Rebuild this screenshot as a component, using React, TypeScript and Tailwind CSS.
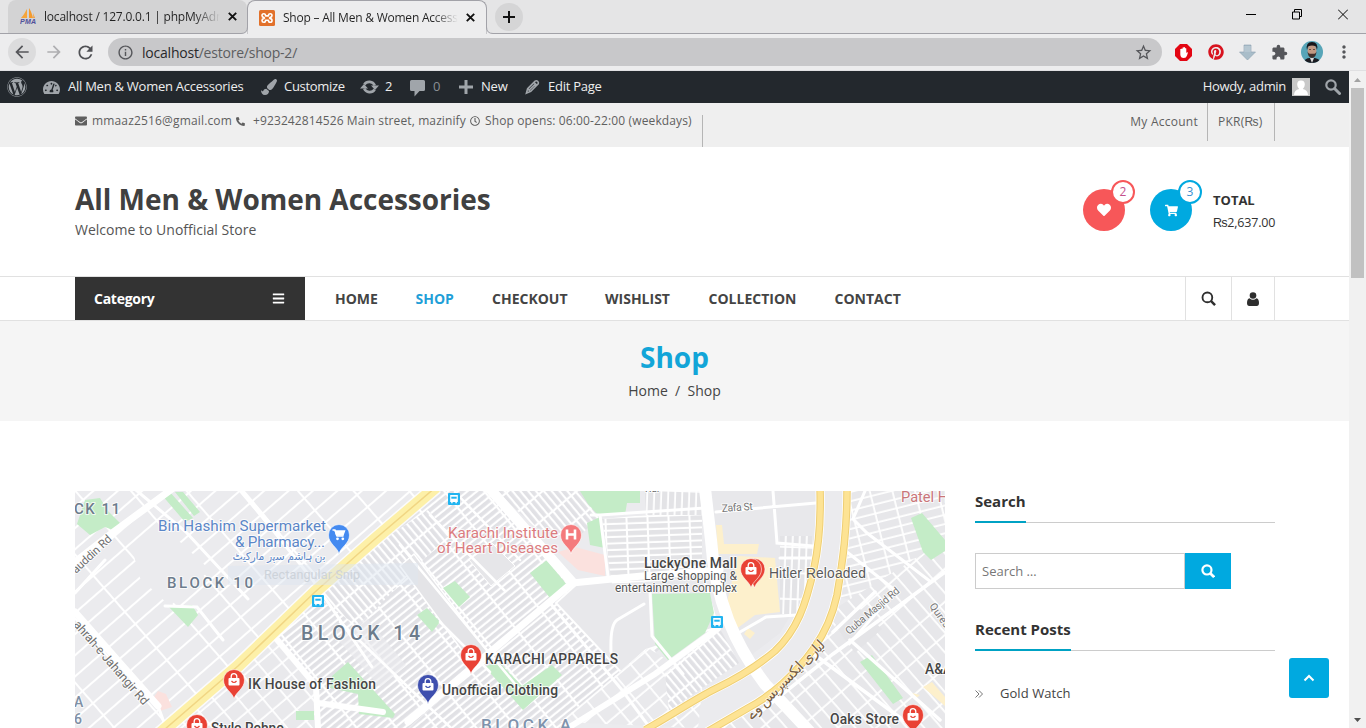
import React from "react";
import { FaWordpress, FaEnvelope, FaRegClock, FaHeart, FaShoppingCart, FaBars, FaPinterest, FaPaintBrush, FaTachometerAlt, FaPhoneAlt } from "react-icons/fa";
import { MdArrowBack, MdArrowForward, MdRefresh, MdInfoOutline, MdStarBorder, MdExtension, MdMoreVert } from "react-icons/md";

/* ---------- small icons ---------- */

function SearchIcon({ size, w = 2 }: { size: number; w?: number }) {
  return (
    <svg width={size} height={size} viewBox="0 0 16 16" fill="none" stroke="currentColor" strokeWidth={w}>
      <circle cx="6.8" cy="6.8" r="5.2" />
      <path d="M10.5 10.5L15 15" strokeWidth={w + 0.6} />
    </svg>
  );
}

function PmaIcon() {
  return (
    <svg width="17" height="17" viewBox="0 0 17 17">
      <path d="M7 1C5 4 4 7 1 10h6z" fill="#f6a53b" />
      <path d="M9 0v10h4C12 6 11 3 9 0zM13 5c0 2 1 4 0 5h2z" fill="#f59a2c" />
      <text x="0" y="16.2" fontSize="7" fontWeight="700" fontStyle="italic" fontFamily="Liberation Sans, sans-serif" fill="#50509a" textLength="16">PMA</text>
    </svg>
  );
}

function XamppIcon() {
  return (
    <svg width="16" height="16" viewBox="0 0 16 16">
      <rect width="16" height="16" rx="1.5" fill="#e2712b" />
      <path d="M4.800 3.800Q3 3.800 3 5.500T4.800 7.400L5.500 8l-.7.600Q3 8.800 3 10.500t1.800 1.800Q6.600 12.300 6.600 10.200h2.800q0 2.100 1.800 2.100T13 10.500 11.200 8.600L10.500 8l.7-.6Q13 7.200 13 5.500T11.200 3.800 9.400 5.900H6.600Q6.600 3.800 4.800 3.800z" fill="none" stroke="#fff" strokeWidth="1.600" strokeLinejoin="round" />
    </svg>
  );
}

function CloseX() {
  return (
    <svg width="9" height="9" viewBox="0 0 9 9" stroke="#111" strokeWidth="1.9">
      <path d="M.8.8l7.4 7.4M8.2.8L.8 8.2" />
    </svg>
  );
}

/* ---------- browser chrome ---------- */

function TabStrip() {
  return (
    <div className="flex h-[34px] border-b border-[#a2a2a8] bg-[#e5e5e6]">
      <div className="ml-2 flex w-[239px] items-center rounded-t-lg bg-[#d3d3d4] pl-3">
        <PmaIcon />
        <span className="ml-[7px] w-[176px] overflow-hidden whitespace-nowrap bg-gradient-to-r from-[#222] from-85% to-[#d3d3d4] bg-clip-text text-[12px] tracking-[-0.2px] text-transparent">
          localhost / 127.0.0.1 | phpMyAdmin
        </span>
        <span className="ml-[8px]"><CloseX /></span>
      </div>
      <div className="relative -mb-px flex w-[240px] items-center rounded-t-lg border border-b-0 border-[#a2a2a8] bg-[#ededee] pl-[11px]">
        <svg width="7" height="7" viewBox="0 0 7 7" className="absolute -left-[7px] bottom-0 fill-[#ededee] stroke-[#a2a2a8]"><path d="M0 6.500Q6.500 6.500 6.500 0V8H0z" stroke="none" /><path d="M0 6.500Q6.500 6.500 6.500 0" fill="none" /></svg>
        <svg width="7" height="7" viewBox="0 0 7 7" className="absolute -right-[7px] bottom-0 fill-[#ededee] stroke-[#a2a2a8]"><path d="M7 6.500Q.5 6.500.5 0V8H7z" stroke="none" /><path d="M7 6.500Q.5 6.500.5 0" fill="none" /></svg>
        <XamppIcon />
        <span className="ml-[8px] w-[175px] overflow-hidden whitespace-nowrap bg-gradient-to-r from-[#222] from-85% to-[#ededee] bg-clip-text text-[12px] tracking-[-0.22px] text-transparent">
          Shop – All Men &amp; Women Accessories
        </span>
        <span className="ml-[8px]"><CloseX /></span>
      </div>
      <div className="ml-[8px] mt-[3px] flex size-[28px] items-center justify-center rounded-full bg-[#d5d5d6]">
        <svg width="12" height="12" viewBox="0 0 12 12" stroke="#111" strokeWidth="2"><path d="M6 0v12M0 6h12" /></svg>
      </div>
      <div className="ml-auto flex items-start gap-[36px] pr-[18px] pt-[9px] text-black">
        <svg width="10" height="11" viewBox="0 0 10 11" stroke="currentColor"><path d="M0 5.5h10" /></svg>
        <svg width="10" height="11" viewBox="0 0 10 11" fill="none" stroke="currentColor"><path d="M.5 3h7v7h-7zM2.5 3V.5h7v7H7.5" /></svg>
        <svg width="10" height="11" viewBox="0 0 10 11" stroke="currentColor"><path d="M0 .5l10 10M10 .5L0 10.5" /></svg>
      </div>
    </div>
  );
}

function Toolbar() {
  return (
    <div className="flex h-[37px] items-center border-b border-[#e0e0e2] bg-[#ededee] text-[#55565a]">
      <div className="ml-2 flex size-[28px] items-center justify-center rounded-full bg-[#dcdcdd]"><MdArrowBack size={20} /></div>
      <MdArrowForward size={20} className="ml-2 text-[#aeaeb1]" />
      <MdRefresh size={21} className="ml-[11px] text-[#505155]" />
      <div className="ml-[12px] flex h-[28px] w-[1054px] items-center rounded-full bg-[#c8c8ca] pl-[9px] pr-[9px]">
        <MdInfoOutline size={17} />
        <span className="ml-[8px] text-[14px] tracking-[-0.22px] text-[#5c5d60]"><span className="text-[#28292b]">localhost</span>/estore/shop-2/</span>
        <MdStarBorder size={19} className="ml-auto" />
      </div>
      <svg width="17" height="17" viewBox="0 0 17 17" className="ml-[13px]">
        <path d="M5 0h7l5 5v7l-5 5H5l-5-5V5z" fill="#e30613" />
        <path d="M5.300 5v5.500q.2 3.500 3.500 3.500 2.500 0 3.200-2.500L13 8.500q-.8-.8-1.700.5V4.500q-.7-.8-1.200 0V3.500q-.7-.8-1.300 0-.7-.6-1.300.3V5q-1-1-1.200 0z" fill="#fff" />
      </svg>
      <FaPinterest size={16} className="ml-4 text-[#d8131f]" />
      <svg width="17" height="17" viewBox="0 0 17 17" className="ml-[15px]">
        <path d="M5 1h7v7h4.500l-8 8-8-8H5z" fill="#a9bdc9" stroke="#8ba0ae" strokeWidth=".6" />
        <path d="M5 3h7M5 5h7M5 7h7" stroke="#c9d6de" strokeWidth=".8" />
      </svg>
      <MdExtension size={17} className="ml-[15px]" />
      <svg width="22" height="22" viewBox="0 0 22 22" className="ml-[13px]">
        <clipPath id="face"><circle cx="11" cy="11" r="11" /></clipPath>
        <g clipPath="url(#face)">
          <rect width="22" height="22" fill="#57a5b8" />
          <path d="M2 22q2-5 7-5h5q5 1 6 5z" fill="#1b1c22" />
          <path d="M9 17l2 5 2-5z" fill="#dcdcdc" />
          <ellipse cx="11" cy="9.500" rx="4.400" ry="6" fill="#c29a84" />
          <path d="M6 9Q4.500 1 11 1 17.500 1 16 9L15 5.500Q11 3.500 7 5.500z" fill="#18161a" />
          <path d="M6.500 10.500q.5 6.500 4.500 6.500t4.500-6.500q-1 2.500-2.300 2.300H8.800q-1.300 0-2.300-2.300z" fill="#3d2f2b" />
          <path d="M8 8.500h2M12 8.500h2" stroke="#4a372f" strokeWidth=".8" />
        </g>
      </svg>
      <MdMoreVert size={20} className="ml-[11px]" />
    </div>
  );
}

/* ---------- site ---------- */

function AdminBar() {
  return (
    <div className="flex h-[32px] items-center bg-[#23282d] text-[13px] text-[#eee]">
      <FaWordpress size={20} className="ml-[7px] text-[#a0a5aa]" />
      <FaTachometerAlt size={17} className="ml-[16px] text-[#a0a5aa]" />
      <span className="ml-[8px] w-[176px] whitespace-nowrap tracking-[-0.25px]">All Men &amp; Women Accessories</span>
      <FaPaintBrush size={16} className="ml-[17px] text-[#a0a5aa]" />
      <span className="ml-[7px] w-[61px] whitespace-nowrap tracking-[-0.3px]">Customize</span>
      <svg width="19" height="16" viewBox="0 0 19 16" className="ml-[15px]">
        <path d="M4.300 5.500A6 6 0 0 1 14.800 6.500M14.700 10.500A6 6 0 0 1 4.200 9.500" fill="none" stroke="#a0a5aa" strokeWidth="2.600" />
        <path d="M11 6.500h8L15 11zM0 9.500h8L4 5z" fill="#a0a5aa" />
      </svg>
      <span className="ml-[6px] w-[8px]">2</span>
      <svg width="15" height="17" viewBox="0 0 15 17" className="ml-[17px] mt-[2px] fill-[#a0a5aa]"><path d="M1.500 0h12q1.500 0 1.500 1.500v8q0 1.500-1.500 1.500H9.500l-5 5.500V11h-3Q0 11 0 9.500v-8Q0 0 1.500 0z" /></svg>
      <span className="ml-[8px] w-[8px] text-[#8a8f94]">0</span>
      <svg width="14" height="14" viewBox="0 0 14 14" className="ml-[18px] fill-[#a0a5aa]"><path d="M5.500 0h3v5.500H14v3H8.500V14h-3V8.500H0v-3h5.500z" /></svg>
      <span className="ml-[8px] w-[27px] whitespace-nowrap tracking-[-0.2px]">New</span>
      <svg width="15" height="16" viewBox="0 0 16 16" className="ml-[17px]" fill="none" stroke="#a0a5aa" strokeWidth="1.700"><path d="M1.500 14.500l1.300-4.800 8-8q1.500-.8 2.700.3 1.300 1.200.6 2.700l-8 8zM2.800 9.700l3.300 3.200M9.500 3l3.500 3.500M4.500 11.200l6.800-6.600" /></svg>
      <span className="ml-[8px] whitespace-nowrap tracking-[-0.25px]">Edit Page</span>
      <span className="ml-auto whitespace-nowrap tracking-[-0.32px]">Howdy, admin</span>
      <svg width="18" height="18" viewBox="0 0 18 18" className="ml-[6px]">
        <rect width="18" height="18" fill="#c8c8c8" />
        <path d="M9 2.500q4 0 3.800 4.300-.2 3-2 4.200 5 1 5.200 6H2q.2-5 5.200-6-1.800-1.200-2-4.200Q5 2.500 9 2.500z" fill="#fff" />
      </svg>
      <svg width="16" height="16" viewBox="0 0 16 16" className="ml-[15px] mr-[8px]" fill="none" stroke="#a0a5aa"><circle cx="6" cy="6" r="4.700" strokeWidth="2.200" /><path d="M9.500 9.500l5 5" strokeWidth="3" strokeLinecap="round" /></svg>
    </div>
  );
}

function TopBar() {
  return (
    <div className="flex h-[44px] bg-[#efefef] pl-[75px] pr-[74px] text-[12px] font-medium text-[#5f5f5f]">
      <div className="mt-[12px] flex h-[32px] w-[628px] items-start whitespace-nowrap border-r border-[#b5b5b5] leading-[12px]">
        <FaEnvelope size={12} className="shrink-0" />
        <span className="ml-[5px] w-[140px] tracking-[0.16px]">mmaaz2516@gmail.com</span>
        <FaPhoneAlt size={9} className="ml-[4px] mt-[2px] shrink-0" />
        <span className="ml-[8px] w-[214px] tracking-[0.11px]">+923242814526 Main street, mazinify</span>
        <FaRegClock size={10} className="ml-[3px] mt-px shrink-0" />
        <span className="ml-[5px] tracking-[0.13px]">Shop opens: 06:00-22:00 (weekdays)</span>
      </div>
      <div className="ml-auto flex h-[38px]">
        <span className="border-r border-[#b5b5b5] pr-[9px] leading-[37px] tracking-[0.25px]">My Account</span>
        <span className="w-[67px] whitespace-nowrap border-r border-[#b5b5b5] pl-[10px] leading-[37px] tracking-[0.25px]">PKR(₨)</span>
      </div>
    </div>
  );
}

function Header() {
  return (
    <div className="flex h-[129px] justify-between pl-[75px] pr-[74px]">
      <div className="pt-[33px]">
        <h1 className="whitespace-nowrap text-[28px] font-bold leading-[38px] tracking-[-0.02px] text-[#404040]">All Men &amp; Women Accessories</h1>
        <p className="mt-px text-[14px] leading-[22px] tracking-[0.01px] text-[#555]">Welcome to Unofficial Store</p>
      </div>
      <div className="flex pt-[42px]">
        <div className="relative flex size-[42px] items-center justify-center rounded-full bg-[#f75759] text-white">
          <FaHeart size={14} />
          <span className="absolute -right-[10px] -top-[9px] flex size-[24px] items-center justify-center rounded-full border-2 border-[#f75759] bg-white text-[12px] text-[#c4508c]">2</span>
        </div>
        <div className="relative ml-[25px] flex size-[42px] items-center justify-center rounded-full bg-[#00a9e0] text-white">
          <FaShoppingCart size={13} />
          <span className="absolute -right-[10px] -top-[9px] flex size-[24px] items-center justify-center rounded-full border-2 border-[#00a9e0] bg-white text-[12px] text-[#3a8fd0]">3</span>
        </div>
        <div className="ml-[21px] w-[62px] whitespace-nowrap text-[#333]">
          <div className="text-[13px] font-bold leading-[23px]">TOTAL</div>
          <div className="text-[12.500px] leading-[22px] tracking-[-0.2px]">₨2,637.00</div>
        </div>
      </div>
    </div>
  );
}

function Nav() {
  return (
    <div className="flex h-[45px] border-y border-[#e1e1e1] pl-[75px] pr-[74px] text-[14px] font-bold text-[#444]">
      <div className="flex w-[230px] items-center justify-between bg-[#333] pl-[19px] pr-[20px] text-white">
        <span className="tracking-[-0.26px]">Category</span>
        <FaBars size={13} />
      </div>
      <div className="flex items-center whitespace-nowrap pl-[30px]">
        <span className="w-[80.500px]">HOME</span>
        <span className="w-[76.500px] text-[#1f9fd8]">SHOP</span>
        <span className="w-[113px]">CHECKOUT</span>
        <span className="w-[103.500px]">WISHLIST</span>
        <span className="w-[126px]">COLLECTION</span>
        <span>CONTACT</span>
      </div>
      <div className="ml-auto flex text-[#2e2e2e]">
        <div className="flex w-[46px] items-center justify-center border-l border-[#e1e1e1]"><SearchIcon size={15} w={2} /></div>
        <div className="flex w-[44px] items-center justify-center border-x border-[#e1e1e1]">
          <svg width="12" height="14" viewBox="0 0 12 14" fill="currentColor"><circle cx="6" cy="3.500" r="3.300" /><path d="M2.500 6.200Q6 9.300 9.500 6.200 12 7 12 11q0 3-2.300 3H2.300Q0 14 0 11q0-4 2.500-4.800z" /></svg>
        </div>
      </div>
    </div>
  );
}

/* ---------- map ---------- */

const C = {
  road: "#ffffff",
  land: "#ebebee",
  park: "#c4ecc7",
  hwy: "#fdf0a8",
};

function Grid({ id, w, h, a, gap = 1.8, fill = "#e7e7ea", x = 0, y = 0 }: { id: string; w: number; h: number; a: number; gap?: number; fill?: string; x?: number; y?: number }) {
  return (
    <pattern id={id} width={w} height={h} patternUnits="userSpaceOnUse" patternTransform={`translate(${x} ${y}) rotate(${a})`}>
      <rect width={w} height={h} fill="#fff" />
      <rect width={w - gap} height={h - gap} fill={fill} />
    </pattern>
  );
}

function Pin({ x, y, color, kind }: { x: number; y: number; color: string; kind: "bag" | "cart" | "h" }) {
  return (
    <g transform={`translate(${x} ${y})`}>
      <path d="M0 19C-1.500 12-10.500 9-10.500 0a10.500 10.500 0 0 1 21 0C10.500 9 1.500 12 0 19z" fill={color} stroke="#fff" strokeWidth=".6" />
      {kind === "bag" && (
        <g>
          <rect x="-5.500" y="-2" width="11" height="7.500" rx="1" fill="#fff" />
          <path d="M-2.800-2v-1.500a2.800 2.800 0 0 1 5.600 0V-2" fill="none" stroke="#fff" strokeWidth="1.300" />
          <path d="M-2.500 1q2.500 3 5 0" fill="none" stroke={color} strokeWidth="1.200" />
        </g>
      )}
      {kind === "cart" && (
        <g fill="none" stroke="#fff" strokeWidth="1.400">
          <path d="M-6.500-5h2.500l2 6h6.500" />
          <path d="M-3.800-4H5.500L4 0h-6.500z" fill="#fff" />
          <circle cx="-1.500" cy="3.800" r=".7" /><circle cx="3.800" cy="3.800" r=".7" />
        </g>
      )}
      {kind === "h" && <path d="M-4-5.500v10M4-5.500v10M-4-.5h8" stroke="#fff" strokeWidth="2.600" />}
    </g>
  );
}

function Bus({ x, y }: { x: number; y: number }) {
  return (
    <g transform={`translate(${x} ${y})`}>
      <rect x="-6" y="-6" width="12" height="12" rx="1" fill="#21b4f0" />
      <path d="M-3.800-4h7.600v7h-1v1.200h-1.400V3h-2.800v1.200h-1.400V3h-1z" fill="#fff" />
      <path d="M-2.700-2.300h5.400v2h-5.400z" fill="#21b4f0" />
    </g>
  );
}

type LabelProps = { x: number; y: number; len?: number; size: number; color?: string; anchor?: "start" | "end" | "middle"; weight?: number; rotate?: number; font?: string; children: string };

function Label({ x, y, len, size, color = "#454545", anchor = "start", weight = 400, rotate = 0, font = "Roboto, sans-serif", children }: LabelProps) {
  return (
    <text
      transform={`translate(${x} ${y}) rotate(${rotate})`}
      textAnchor={anchor}
      fontSize={size}
      fontWeight={weight}
      fontFamily={font}
      fill={color}
      stroke="#fff"
      strokeWidth="2"
      strokeOpacity=".75"
      strokeLinejoin="round"
      paintOrder="stroke"
      textLength={len}
    >
      {children}
    </text>
  );
}

function StoreMap() {
  const left = "M820 488C821 520 819 545 814 568C806 605 797 630 775 651C755 668 738 678 715 689C695 699 675 713 645 730";
  const right = "M847 488C847 530 843 560 837 595C832 618 824 634 814 648C796 674 771 696 748 708L705 733";
  return (
    <svg width="870" height="237" viewBox="75 491 870 237" className="block shrink-0">
      <defs>
        <Grid id="nw" w={42} h={16} a={-41} gap={2} fill="#ebebee" x={95} y={512} />
        <Grid id="sw" w={19} h={15} a={-40} fill="#e9e9ec" />
        <Grid id="strip" w={31} h={6} a={-39} gap={2.2} fill="#e1e1e5" x={8} y={0} />
        <Grid id="dense" w={6} h={22} a={-40} gap={2.2} fill="#e1e1e5" />
        <Grid id="rows" w={21} h={6.5} a={-2} gap={2} fill="#e3e3e6" />
        <Grid id="cols" w={7} h={26} a={2} gap={1.8} fill="#e3e3e6" />
        <Grid id="east" w={13} h={25} a={-41} fill="#e7e7ea" />
        <Grid id="east2" w={22} h={9} a={-14} fill="#e7e7ea" />
      </defs>
      <rect x="75" y="491" width="870" height="237" fill={C.land} />

      {/* street blocks */}
      <path d="M75 491H435L165 728H75z" fill="url(#nw)" />
      <path d="M133 552l32-24 45 42-40 36-30-28z" fill={C.land} />
      <path d="M435 491H492L572 582 408 728H165z" fill="url(#strip)" />
      <path d="M165 728L275 636 318 688 316 728z" fill="url(#sw)" />
      <path d="M318 598l65-58 45-30 22 24-32 31-59 62z" fill="url(#dense)" />
      <path d="M400 566l14-12L545 728h-26z" fill="#e4e4e7" stroke="#fff" strokeWidth="1.500" />
      <path d="M469 560l23-17 23 23-24 20z" fill="#e6e6e9" stroke="#fff" />
      <path d="M338 640l28-23 40 48-26 22z" fill={C.land} opacity=".6" />
      <path d="M496 491H585L602 515 575 540 535 527z" fill="url(#dense)" />
      <path d="M572 584L495 650 410 728H560L665 645z" fill="url(#strip)" />
      <path d="M556 603l22-20 125-8 15 52-72 23-25 22z" fill="#e8e8eb" stroke="#fff" strokeWidth="2" />
      <path d="M560 722l88-74 55 35-5 45z" fill="url(#sw)" />
      <path d="M602 519l100-9v68l-90 6z" fill="url(#rows)" />
      <path d="M645 491h58v24h-58z" fill="url(#cols)" />
      <path d="M712 491H815V575L780 633 745 660 728 620 715 570z" fill="#e8e8eb" />
      <path d="M780 536h33v40l-12 38h-21z" fill="url(#cols)" />
      <path d="M850 491h95v50l-60 66-46-10z" fill="url(#east2)" />
      <path d="M945 540v188H712l94-60 30-60z" fill="url(#east)" />
      <path d="M835 626l25-17 22 20-27 24z" fill="#e4e4e7" />
      <path d="M665 674l54-47 20 36-70 48z" fill="url(#dense)" />

      {/* points of interest */}
      <g fill={C.park}>
        <path d="M85 500l15-2 8 13 12 12-2 9-13-5-15 8-13-11z" />
        <path d="M161 494l8-3 24 27-8 4zM175 492h8l17 20-6 4z" />
        <path d="M168 606l24-1 6 10-10 12z" />
        <path d="M332 676l16-14 47 52-2 4-34-4-1-20-28-6z" />
        <path d="M296 711h18v9h-18z" />
        <path d="M530 573l17-13 20 25-17 13zM443 588l12-7 15 16-11 10zM417 615l10-7 13 14-8 10z" />
        <path d="M485 667l13-6 24 25 30-21 10 10-39 35z" />
        <path d="M580 491h60v12h-13l-2 12h-27l-10-11zM587 523l13-6 5 31-15-3z" />
        <path d="M652 594l58-1 4 20-9 20-37 27-13-16z" />
        <path d="M911 518l11-5 23 27v11l-14 9-8-8zM860 662l12-7 31 43-10 6z" />
      </g>
      <path d="M558 552l17-5 30 8v21l-27-6zM158 691l8 3 6 13-12 4-8-11z" fill="#fbe1de" />
      <path d="M716 525h6l2 19h35l-2 10h-39zM738 556l37 2 5 54-25 3-20 15-8-28zM748 628l7 5-5 6-6-5zM923 687l9-5 13 15v9zM912 693l8 2-5 4z" fill="#fdf0cc" />

      {/* streets */}
      <g fill="none" stroke={C.road} strokeLinecap="round">
        <path d="M172 489L112 533 70 566M75 612L158 706" strokeWidth="7" />
        <path d="M158 706L166 728M75 593L105 560M136 490l50 42 62 67" strokeWidth="3" />
        <path d="M240 489l72 90 60 88M165 606l32 1 26 33" strokeWidth="3" />
        <path d="M240 489l38 45" strokeWidth="5" />
        <path d="M274 636l42 50 2 42M318 703l65 9" strokeWidth="6" />
        <path d="M490 489L572 582" strokeWidth="10" />
        <path d="M572 583L642 576 720 570M572 583L495 648 408 722" strokeWidth="7" />
        <path d="M705 489L711 540C715 600 735 645 765 684L810 732" strokeWidth="12" />
        <path d="M718 628L655 674 568 728" strokeWidth="6" />
        <path d="M591 515L600 515 608 576M600 515L705 508M644 604L617 620Q610 625 611 652M650 591l2 45 31 38M550 603L622 690 650 728" strokeWidth="3" />
        <path d="M716 512l100-9M773 491l4 52 36 3M780 558h34M740 632l26-15 31-2M865 491l-12 28 14 14 64 49M842 548l54 43-47 53" strokeWidth="3" />
        <path d="M945 572L833 654 760 712M833 632l42-40M850 640l90 80M815 655l95 70" strokeWidth="3.500" />
        <path d="M455 492L520 560M430 515l75 76M400 545L520 690M340 622l110 105M440 622l50 50" strokeWidth="2.500" />
      </g>

      {/* highways */}
      <path d="M157 736L238 666 315 592 375 539 436 487" fill="none" stroke="#fff" strokeWidth="15" opacity=".8" />
      <path d="M157 736L238 666 315 592 375 539 436 487" fill="none" stroke={C.hwy} strokeWidth="12" />
      <path d="M157 736L238 666 315 592 375 539 436 487" fill="none" stroke="#f1d684" strokeWidth="1.500" />
      {[left, right].map((d) => (
        <g key={d} fill="none">
          <path d={d} stroke="#fff" strokeWidth="9" />
          <path d={d} stroke="#efcf74" strokeWidth="7.500" />
          <path d={d} stroke="#fde394" strokeWidth="5.500" />
        </g>
      ))}

      <path d="M228 566l190-3v22H228z" fill="#dde6ef" opacity=".5" />
      <text x="264" y="579" fontSize="12.500" fontFamily="Roboto, sans-serif" fill="#cdd3da" textLength="96">Rectangular Snip</text>

      {/* labels */}
      <Label x={74} y={514} size={15} color="#6d7c8c" weight={500} len={46}>CK 11</Label>
      <Label x={167} y={588} size={15} color="#6d7c8c" weight={500} len={86}>BLOCK 10</Label>
      <Label x={301} y={640} size={19.5} color="#6d7c8c" weight={500} len={119}>BLOCK 14</Label>
      <Label x={481} y={731} size={17} color="#7f93ac" weight={500} len={90}>BLOCK A</Label>
      <Label x={74} y={707} size={14} color="#7f8fa4" weight={500}>A</Label>
      <Label x={74} y={724} size={14} color="#7f8fa4" weight={500}>6</Label>
      <Label x={326} y={531} size={15.2} color="#5b86c7" anchor="end" len={168}>Bin Hashim Supermarket</Label>
      <Label x={325} y={546.5} size={15.2} color="#5b86c7" anchor="end" len={90}>&amp; Pharmacy...</Label>
      <Label x={279} y={560} size={11} color="#5b86c7" anchor="middle" font="DejaVu Sans, sans-serif" len={93}>بن ہاشم سپر مارکیٹ</Label>
      <Label x={558} y={538} size={15.2} color="#db7c80" anchor="end" len={110}>Karachi Institute</Label>
      <Label x={558} y={553} size={15.2} color="#db7c80" anchor="end" len={121}>of Heart Diseases</Label>
      <Label x={737} y={567.5} size={13.8} anchor="end" weight={500} len={93}>LuckyOne Mall</Label>
      <Label x={737} y={580} size={12} anchor="end" color="#555" len={93}>Large shopping &amp;</Label>
      <Label x={737} y={592} size={12} anchor="end" color="#555" len={122}>entertainment complex</Label>
      <Label x={769} y={578} size={13.8} color="#5a5a5a" font="Liberation Sans, sans-serif" len={97}>Hitler Reloaded</Label>
      <Label x={485} y={664} size={13.8} weight={500} len={133}>KARACHI APPARELS</Label>
      <Label x={442} y={695} size={13.8} weight={500} len={116}>Unofficial Clothing</Label>
      <Label x={248} y={689} size={13.8} weight={500} len={128}>IK House of Fashion</Label>
      <Label x={211} y={733} size={13.8} weight={500} len={73}>Style Rehno</Label>
      <Label x={830} y={724} size={13.8} weight={500} len={69}>Oaks Store</Label>
      <Label x={925} y={674} size={13.8} weight={500}>A&amp;A</Label>
      <Label x={901} y={502} size={14.6} color="#c97579">Patel Hospital</Label>
      <Label x={645} y={491.5} size={10} color="#666">Rd.</Label>
      <Label x={722} y={512} size={10.5} color="#777" rotate={-4} len={31}>Zafa St</Label>
      <Label x={76} y={574} size={11.5} color="#707070" rotate={-43} len={50}>auddin Rd</Label>
      <Label x={73} y={625} size={12.3} color="#707070" rotate={49} len={107}>ahrah-e-Jahangir Rd</Label>
      <Label x={849} y={635} size={10.5} color="#777" rotate={-40} len={67}>Quba Masjid Rd</Label>
      <Label x={929} y={606} size={10.5} color="#777" rotate={55}>Quresh</Label>
      <text fontFamily="DejaVu Sans, sans-serif" fontSize="14.500" fill="#765d43" stroke="#fff" strokeWidth="1.500" strokeOpacity=".7" paintOrder="stroke" textAnchor="middle" transform="translate(789 683) rotate(-45)" textLength="105">لیاری ایکسپریس وے</text>

      <Pin x={339} y={535} color="#448af0" kind="cart" />
      <Pin x={571} y={535} color="#f47a7c" kind="h" />
      <Pin x={754.5} y={569} color="#e94235" kind="bag" />
      <Pin x={751} y={569} color="#e94235" kind="bag" />
      <Pin x={471} y={655} color="#e94235" kind="bag" />
      <Pin x={428} y={685} color="#3e4fae" kind="bag" />
      <Pin x={234} y={680} color="#e94235" kind="bag" />
      <Pin x={197} y={725} color="#e94235" kind="bag" />
      <Pin x={913} y={715} color="#e94235" kind="bag" />
      <Bus x={454} y={499} />
      <Bus x={318} y={601} />
      <Bus x={717} y={622} />
    </svg>
  );
}

/* ---------- sidebar ---------- */

function WidgetTitle({ children }: { children: React.ReactNode }) {
  return (
    <div className="flex h-[32px] border-b border-[#ccc]">
      <h2 className="-mb-px h-[32px] whitespace-nowrap border-b-2 border-[#00a2c4] text-[15px] font-bold leading-[21px] text-[#333]">{children}</h2>
    </div>
  );
}

function Sidebar() {
  return (
    <div className="w-[300px] shrink-0 text-[13px]">
      <WidgetTitle>Search</WidgetTitle>
      <div className="mt-[30px] flex h-[36px]">
        <div className="flex w-[210px] items-center border border-[#ccc] pl-[6px] pt-[2px] text-[#777]">Search …</div>
        <div className="flex w-[46px] items-center justify-center bg-[#00a9e0] text-white"><SearchIcon size={14} w={2.5} /></div>
      </div>
      <div className="mt-[30px]"><WidgetTitle>Recent Posts</WidgetTitle></div>
      <div className="mt-[32px] flex h-[22px] items-center text-[#444]">
        <svg width="8" height="8" viewBox="0 0 8 8" fill="none" stroke="#777"><path d="M.5.5L4 4 .5 7.500M4 .5L7.500 4 4 7.500" /></svg>
        <span className="ml-[17px] tracking-[0.05px]">Gold Watch</span>
      </div>
      <div className="mt-[18px] flex h-[22px] items-center text-[#444]">
        <span className="ml-[25px]">Jack</span>
      </div>
    </div>
  );
}

export default function App() {
  return (
    <div className="flex h-[728px] w-[1366px] flex-col overflow-hidden bg-white font-['Open_Sans',sans-serif]">
      <TabStrip />
      <Toolbar />
      <div className="flex min-h-0 flex-1">
        <div className="relative w-[1349px] overflow-hidden">
          <AdminBar />
          <TopBar />
          <Header />
          <Nav />
          <div className="flex h-[100px] flex-col items-center bg-[#f5f5f5] pt-[17px]">
            <h2 className="text-[28px] font-bold leading-[38px] text-[#12a5d8]">Shop</h2>
            <p className="mt-[4px] whitespace-pre text-[14px] font-medium leading-[22px] text-[#444]">Home  /  Shop</p>
          </div>
          <div className="flex gap-[30px] pl-[75px] pt-[70px]">
            <StoreMap />
            <Sidebar />
          </div>
          <div className="absolute bottom-[30px] right-[20px] flex size-[40px] items-center justify-center rounded-[3px] bg-[#00a9e0]">
            <svg width="12" height="8" viewBox="0 0 12 8" fill="none" stroke="#fff" strokeWidth="2"><path d="M1.500 6.500L6 2l4.500 4.500" /></svg>
          </div>
        </div>
        <div className="flex w-[17px] flex-col items-center bg-[#f1f1f1]">
          <svg width="17" height="17" viewBox="0 0 17 17" fill="#a3a3a3"><path d="M5 11l3.500-4 3.500 4z" /></svg>
          <div className="h-[190px] w-[13px] bg-[#c1c1c1]" />
          <svg width="17" height="17" viewBox="0 0 17 17" fill="#505050" className="mt-auto"><path d="M5 7l3.500 4L12 7z" /></svg>
        </div>
      </div>
    </div>
  );
}
